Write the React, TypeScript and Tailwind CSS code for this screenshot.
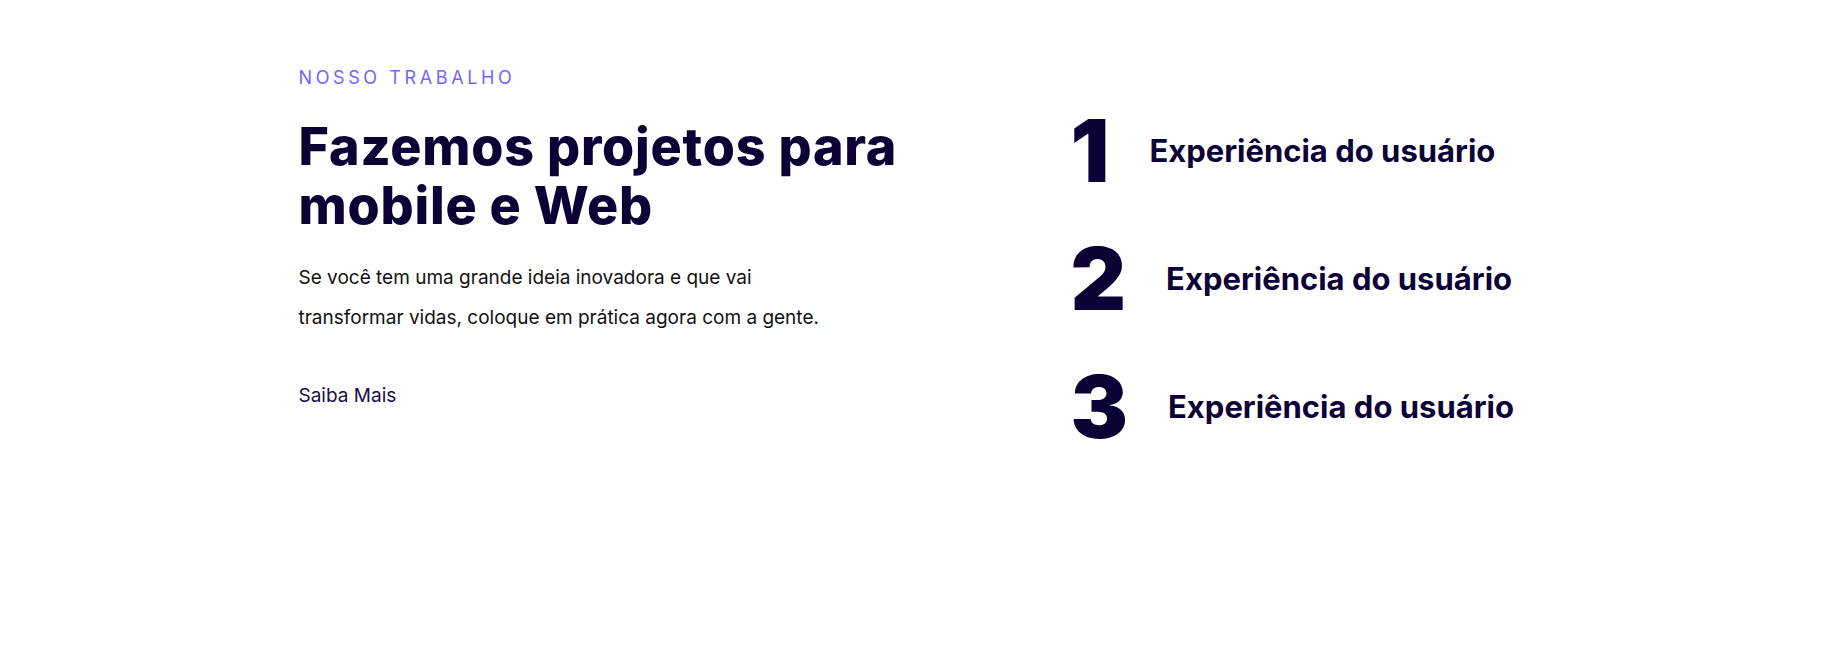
const items = ["1", "2", "3"];

export default function App() {
  return (
    <div className="min-h-[655px] w-full bg-white font-['Inter',sans-serif] text-[#0c0035]">
      <section className="mx-auto flex w-[1244px] pt-[65px]">
        <div className="w-[772px] shrink-0">
          <p className="text-[18px] leading-[26px] tracking-[0.2em] text-[#7b61ff]">NOSSO TRABALHO</p>
          <h2 className="mt-[26px] w-[640px] text-[52px] font-extrabold leading-[59px] tracking-[0.015em]">
            Fazemos projetos para mobile e Web
          </h2>
          <p className="mt-[23px] w-[540px] text-[19px] leading-[40px] text-[#111]">
            Se você tem uma grande ideia inovadora e que vai transformar vidas, coloque em prática agora com a gente.
          </p>
          <a href="#" className="mt-[46px] inline-block text-[19px] leading-[24px] text-[#170f49]">
            Saiba Mais
          </a>
        </div>
        <div className="flex flex-col gap-[40px] pt-[42px]">
          {items.map((n) => (
            <div key={n} className="flex items-center">
              <span className="text-[86px] font-black leading-[88px]">{n}</span>
              <span className="ml-[40px] text-[31px] font-bold">Experiência do usuário</span>
            </div>
          ))}
        </div>
      </section>
    </div>
  );
}
